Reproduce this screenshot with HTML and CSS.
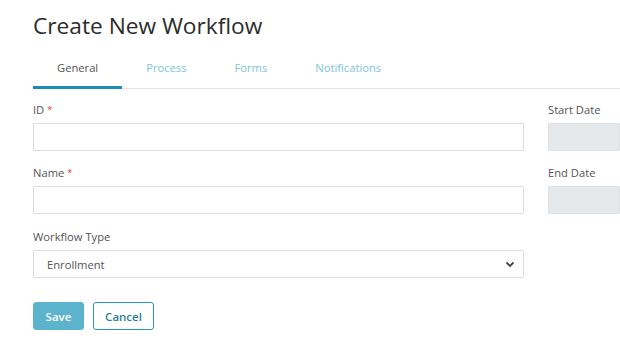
FILE: index.html
```html
<!DOCTYPE html>
<html lang="en">
<head>
  <meta charset="UTF-8" />
  <title>Create New Workflow</title>
  <link rel="stylesheet" href="styles.css">
</head>
<body>
  <div class="page">
    <h1 class="title">Create New Workflow</h1>

    <div class="tabs">
      <a class="tab active">General</a>
      <a class="tab">Process</a>
      <a class="tab">Forms</a>
      <a class="tab">Notifications</a>
    </div>

    <form class="form">
      <div class="columns">
        <div class="col main">
          <div class="field">
            <label>ID <span class="req">*</span></label>
            <input type="text" class="input">
          </div>
          <div class="field">
            <label>Name <span class="req">*</span></label>
            <input type="text" class="input">
          </div>
          <div class="field type">
            <label>Workflow Type</label>
            <div class="select">
              <span>Enrollment</span>
              <svg width="10" height="7" viewBox="0 0 10 7"><path d="M1.5 1.5 5 5l3.5-3.5" fill="none" stroke="#444" stroke-width="1.8"/></svg>
            </div>
          </div>
        </div>
        <div class="col side">
          <div class="field">
            <label>Start Date</label>
            <input type="text" class="input" disabled>
          </div>
          <div class="field">
            <label>End Date</label>
            <input type="text" class="input" disabled>
          </div>
        </div>
      </div>

      <div class="actions">
        <button type="button" class="btn save">Save</button>
        <button type="button" class="btn cancel">Cancel</button>
      </div>
    </form>
  </div>
</body>
</html>
```

FILE: styles.css
```css
* {
  box-sizing: border-box;
  margin: 0;
  padding: 0;
}

body {
  font-family: 'Open Sans', sans-serif;
  background: #fff;
  color: #555;
  overflow: hidden;
}

.page {
  padding: 11px 0 0 33px;
  width: 620px;
}

.title {
  font-size: 22.7px;
  font-weight: 400;
  color: #2b2b2b;
  line-height: 30px;
}

.tabs {
  display: flex;
  margin-top: 18px;
  border-bottom: 1px solid #e6e6e6;
}

.tab {
  padding: 0 24px;
  font-size: 11.2px;
  line-height: 18px;
  height: 30px;
  color: #7cc5da;
  border-bottom: 3px solid transparent;
  margin-bottom: -1px;
}

.tab.active {
  color: #555;
  border-bottom-color: #1a8fb3;
}

.form {
  margin-top: 12px;
}

.columns {
  display: grid;
  grid-template-columns: 491px 1fr;
  gap: 24px;
}

.field {
  margin-bottom: 13px;
}

.field.type {
  padding-top: 1px;
}

.field label {
  display: block;
  font-size: 11.2px;
  line-height: 17px;
  margin-bottom: 5px;
  color: #555;
}

.req {
  color: #e8333a;
  font-size: 9px;
  vertical-align: 1px;
}

.input,
.select {
  display: block;
  width: 100%;
  height: 28px;
  border: 1px solid #dcdcdc;
  border-radius: 1px;
  background: #fff;
  font-family: inherit;
}

.input:disabled {
  background: #e6e9ec;
  border-color: #dfe2e5;
}

.select {
  display: flex;
  align-items: center;
  justify-content: space-between;
  padding: 0 8px 0 13px;
  font-size: 11.2px;
  color: #555;
}

.actions {
  display: flex;
  gap: 9px;
  margin-top: 11px;
}

.btn {
  height: 28px;
  border-radius: 3px;
  font-family: inherit;
  font-size: 11.5px;
  font-weight: 600;
  cursor: pointer;
}

.save {
  width: 51px;
  background: #5cb4cc;
  border: 1px solid #5cb4cc;
  color: #fff;
}

.cancel {
  width: 61px;
  background: #fff;
  border: 1px solid #2a95b6;
  color: #2b7d98;
}
```
